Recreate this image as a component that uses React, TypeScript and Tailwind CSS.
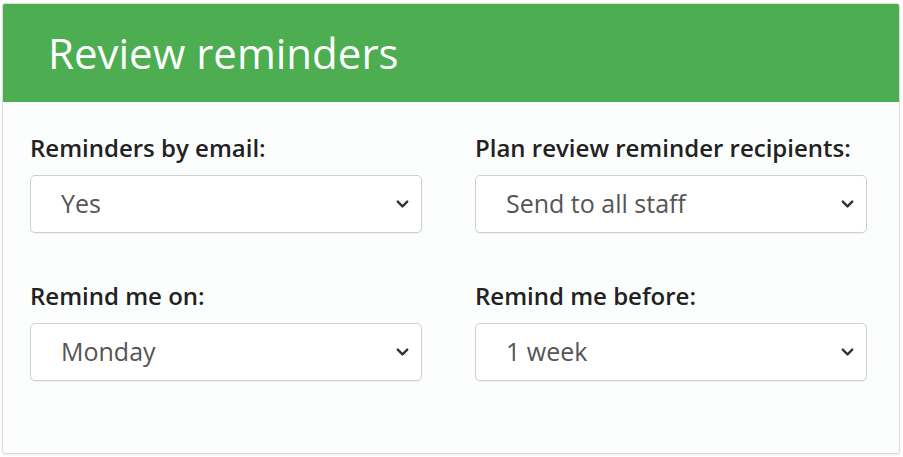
import { ChevronDown } from "lucide-react";

const fields = [
  { label: "Reminders by email:", value: "Yes", options: ["Yes", "No"] },
  {
    label: "Plan review reminder recipients:",
    value: "Send to all staff",
    options: ["Send to all staff", "Send to managers only"],
  },
  {
    label: "Remind me on:",
    value: "Monday",
    options: ["Monday", "Tuesday", "Wednesday", "Thursday", "Friday"],
  },
  { label: "Remind me before:", value: "1 week", options: ["1 week", "2 weeks", "1 month"] },
];

const Field = ({ label, value, options }: { label: string; value: string; options: string[] }) => (
  <div className="flex flex-col">
    <label className="text-[24px] leading-[30px] text-[#222] font-semibold mb-[12px]">{label}</label>
    <div className="relative">
      <select
        defaultValue={value}
        className="w-full h-[58px] appearance-none rounded-[5px] border border-[#cfcfcf] bg-white pl-[30px] pr-10 text-[25px] text-[#555] shadow-[0_1px_1px_rgba(0,0,0,0.05)] outline-none"
      >
        {options.map((o) => (
          <option key={o}>{o}</option>
        ))}
      </select>
      <ChevronDown
        className="pointer-events-none absolute right-[10px] top-1/2 -translate-y-1/2 w-[19px] h-[19px] text-[#333]"
        strokeWidth={3}
      />
    </div>
  </div>
);

export default function App() {
  return (
    <div className="w-[903px] h-[457px] bg-white pt-[3px] pl-[2px] font-['Open_Sans',sans-serif]">
      <div className="w-[898px] h-[451px] border border-[#dcdcdc] rounded-[3px] bg-[#fcfefe] overflow-hidden shadow-[0_1px_2px_rgba(0,0,0,0.08)]">
        <div className="h-[98px] bg-[#4cae50] flex items-center pl-[45px]">
          <h1 className="text-[42px] text-white leading-none">Review reminders</h1>
        </div>
        <div className="pt-[31px] pl-[27px] grid grid-cols-[392px_392px] gap-x-[53px] gap-y-[48px]">
          {fields.map((f) => (
            <Field key={f.label} {...f} />
          ))}
        </div>
      </div>
    </div>
  );
}
